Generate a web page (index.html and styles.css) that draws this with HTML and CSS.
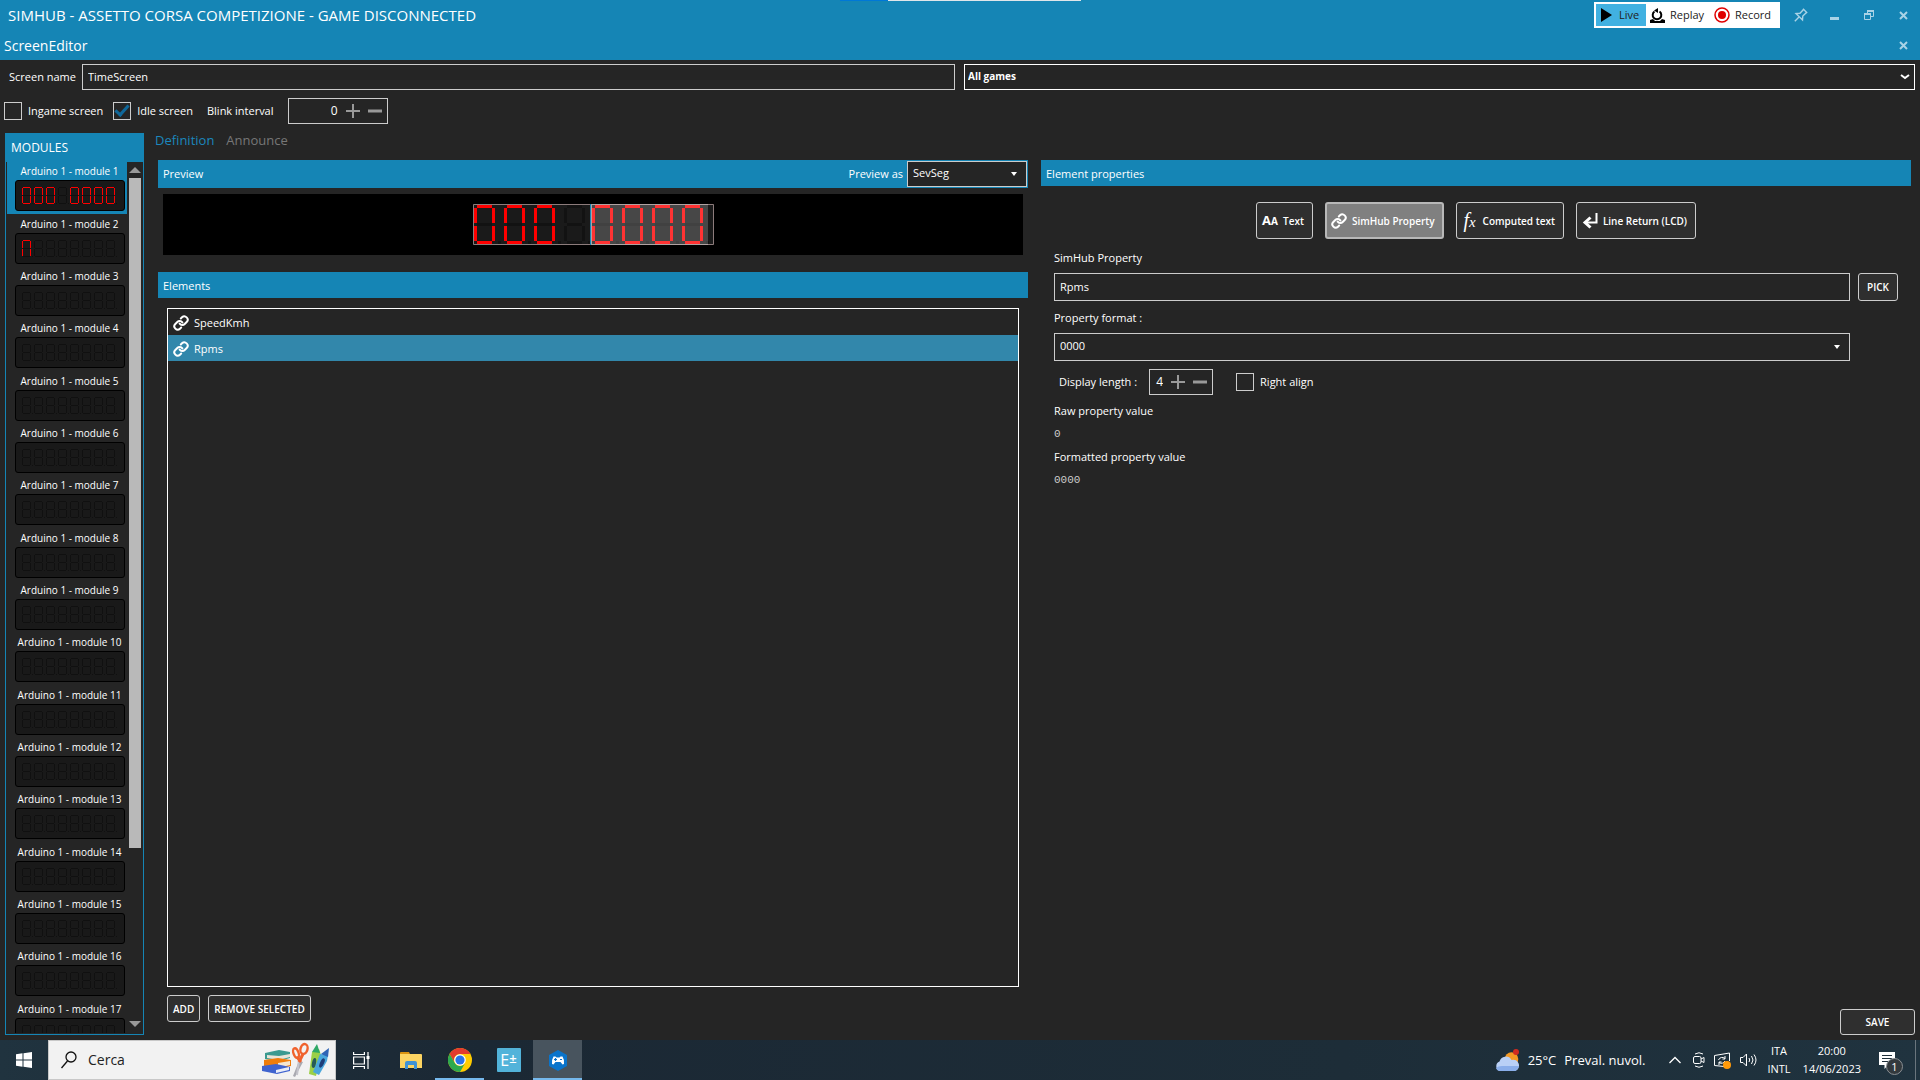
FILE: index.html
```
<!DOCTYPE html>
<html lang="en">
<head>
<meta charset="utf-8">
<title>SimHub - ScreenEditor</title>
<link rel="stylesheet" href="styles.css">
</head>
<body>
<svg class="defs" aria-hidden="true">
  <defs>
    <path id="s-top" d="M1 .5H8"/>
    <path id="s-ul" d="M.5 1V8"/>
    <path id="s-ur" d="M8.500 1V8"/>
    <path id="s-mid" d="M1 8.500H8"/>
    <path id="s-ll" d="M.5 9V16"/>
    <path id="s-lr" d="M8.500 9V16"/>
    <path id="s-bot" d="M1 16.500H8"/>
    <g id="d-zero"><use href="#s-top"/><use href="#s-ul"/><use href="#s-ur"/><use href="#s-ll"/><use href="#s-lr"/><use href="#s-bot"/></g>
    <g id="d-n"><use href="#s-top"/><use href="#s-ul"/><use href="#s-ur"/><use href="#s-ll"/><use href="#s-lr"/></g>
    <g id="d-all"><use href="#d-zero"/><use href="#s-mid"/><path d="M10 16.500h1"/></g>
    <g id="seg-row" stroke="#101010">
      <use href="#d-all" x="6" y="6"/><use href="#d-all" x="18" y="6"/><use href="#d-all" x="30" y="6"/><use href="#d-all" x="42" y="6"/><use href="#d-all" x="54" y="6"/><use href="#d-all" x="66" y="6"/><use href="#d-all" x="78" y="6"/><use href="#d-all" x="90" y="6"/>
    </g>
    <path id="big-zero" d="M3 0h15v3H3zM0 3h3v15H0zM18 3h3v15h-3zM0 21h3v15H0zM18 21h3v15h-3zM3 36h15v3H3z"/>
    <path id="big-mid" d="M3 18h15v3H3zM24 36h3v3h-3z"/>
    <g id="link" fill="none" stroke="currentColor" stroke-width="3" stroke-linecap="round">
      <path d="M10 13a5 5 0 0 0 7.540.540l3-3a5 5 0 0 0-7.070-7.070l-1.720 1.710"/>
      <path d="M14 11a5 5 0 0 0-7.540-.540l-3 3a5 5 0 0 0 7.070 7.070l1.710-1.710"/>
    </g>
    <path id="cross" d="M1 1l7 7M8 1l-7 7" stroke="currentColor" stroke-width="2" fill="none"/>
    <path id="plus" d="M7 0v14M0 7h14" stroke="currentColor" stroke-width="2" fill="none"/>
    <path id="minus" d="M0 7h14" stroke="currentColor" stroke-width="3" fill="none"/>
  </defs>
</svg>

<header class="titles">
  <div class="capture"></div>
  <div class="titlebar">
    <h1 class="app-title">SIMHUB - ASSETTO CORSA COMPETIZIONE - GAME DISCONNECTED</h1>
    <div class="modes">
      <button class="mode mode-live on"><svg width="12" height="14"><path d="M0 0l11 7-11 7z"/></svg>Live</button>
      <button class="mode mode-replay"><svg width="15" height="15" viewBox="0 0 15 15"><path d="M4.500 3.500a4.300 4.300 0 1 0 5 0" fill="none" stroke="#000" stroke-width="2"/><path d="M8 0v5L4 2.500zM0 15v-3l3-1 2 2h5l2-2 3 1v3z"/></svg>Replay</button>
      <button class="mode mode-record"><svg width="16" height="16" viewBox="0 0 16 16"><circle cx="8" cy="8" r="7" fill="none" stroke="#e00000" stroke-width="1.500"/><circle cx="8" cy="8" r="4" fill="#e00000"/></svg>Record</button>
    </div>
    <button class="win" aria-label="Pin"><svg width="14" height="14" viewBox="0 0 14 14" fill="none" stroke="currentColor" stroke-width="1.400"><path d="M9 .8l4.200 4.200M9.500 1.500L6 5.200l-4 .3 6.500 6.500.3-4 3.700-3.500M5 9L.8 13.200"/></svg></button>
    <button class="win" aria-label="Minimize"><svg width="10" height="10"><path d="M0 7h9v3H0z" fill="currentColor"/></svg></button>
    <button class="win" aria-label="Restore"><svg width="10" height="10" fill="none" stroke="currentColor"><path d="M3.500 3V.5h6v6H7M.5 3.500h6v6h-6z"/><path d="M3 1h7M0 4h7" stroke-width="2"/></svg></button>
    <button class="win" aria-label="Close"><svg width="9" height="9"><use href="#cross"/></svg></button>
  </div>
  <div class="titlebar">
    <h2 class="app-title app-sub">ScreenEditor</h2>
    <button class="win" aria-label="Close editor"><svg width="9" height="9"><use href="#cross"/></svg></button>
  </div>
</header>

<main class="editor">
  <div class="name-row">
    <label for="screen-name">Screen name</label>
    <input class="field" id="screen-name" type="text" value="TimeScreen">
    <div class="pick-list strong-list">
      <select class="field" aria-label="Games"><option>All games</option></select>
      <svg class="caret" width="10" height="6"><path d="M1 1l4 3 4-3" fill="none" stroke="#fff" stroke-width="2"/></svg>
    </div>
  </div>

  <div class="options">
    <label class="check"><input type="checkbox">Ingame screen</label>
    <label class="check"><input type="checkbox" checked>Idle screen</label>
    <label class="blink-label" for="blink">Blink interval</label>
    <div class="stepper stepper-wide">
      <input id="blink" type="text" value="0">
      <button aria-label="Increase blink interval"><svg width="14" height="14"><use href="#plus"/></svg></button>
      <button aria-label="Decrease blink interval"><svg width="14" height="14"><use href="#minus"/></svg></button>
    </div>
  </div>

  <div class="workspace">
    <aside class="modules">
      <h3 class="modules-head">MODULES</h3>
      <div class="modules-body">
        <ul class="module-list">
          <li class="module selected">Arduino 1 - module 1<svg class="display"><use href="#seg-row"/><g stroke="#f00"><use href="#d-zero" x="6" y="6"/><use href="#d-zero" x="18" y="6"/><use href="#d-zero" x="30" y="6"/><use href="#d-zero" x="54" y="6"/><use href="#d-zero" x="66" y="6"/><use href="#d-zero" x="78" y="6"/><use href="#d-zero" x="90" y="6"/></g></svg></li>
          <li class="module">Arduino 1 - module 2<svg class="display"><use href="#seg-row"/><g stroke="#f00"><use href="#d-n" x="6" y="6"/></g></svg></li>
          <li class="module">Arduino 1 - module 3<svg class="display"><use href="#seg-row"/></svg></li>
          <li class="module">Arduino 1 - module 4<svg class="display"><use href="#seg-row"/></svg></li>
          <li class="module">Arduino 1 - module 5<svg class="display"><use href="#seg-row"/></svg></li>
          <li class="module">Arduino 1 - module 6<svg class="display"><use href="#seg-row"/></svg></li>
          <li class="module">Arduino 1 - module 7<svg class="display"><use href="#seg-row"/></svg></li>
          <li class="module">Arduino 1 - module 8<svg class="display"><use href="#seg-row"/></svg></li>
          <li class="module">Arduino 1 - module 9<svg class="display"><use href="#seg-row"/></svg></li>
          <li class="module">Arduino 1 - module 10<svg class="display"><use href="#seg-row"/></svg></li>
          <li class="module">Arduino 1 - module 11<svg class="display"><use href="#seg-row"/></svg></li>
          <li class="module">Arduino 1 - module 12<svg class="display"><use href="#seg-row"/></svg></li>
          <li class="module">Arduino 1 - module 13<svg class="display"><use href="#seg-row"/></svg></li>
          <li class="module">Arduino 1 - module 14<svg class="display"><use href="#seg-row"/></svg></li>
          <li class="module">Arduino 1 - module 15<svg class="display"><use href="#seg-row"/></svg></li>
          <li class="module">Arduino 1 - module 16<svg class="display"><use href="#seg-row"/></svg></li>
          <li class="module">Arduino 1 - module 17<svg class="display"><use href="#seg-row"/></svg></li>
        </ul>
        <div class="scrollbar">
          <svg width="12" height="6"><path d="M0 6l6-6 6 6z" fill="#999"/></svg>
          <div class="track"><div class="thumb"></div></div>
          <svg width="12" height="6"><path d="M0 0l6 6 6-6z" fill="#999"/></svg>
        </div>
      </div>
    </aside>

    <div class="content">
      <nav class="tabs">
        <a class="tab current" href="#definition">Definition</a>
        <a class="tab" href="#announce">Announce</a>
      </nav>
      <div class="columns">
        <section class="column">
          <div class="bar preview-bar">
            <h3>Preview</h3>
            <label for="preview-as">Preview as</label>
            <div class="pick-list preview-pick">
              <select class="field" id="preview-as"><option>SevSeg</option></select>
              <svg class="caret" width="6" height="4"><path d="M0 0h6L3 4z" fill="#fff"/></svg>
            </div>
          </div>
          <div class="preview">
            <svg width="241" height="41" viewBox="-1 -1 241 41">
              <path d="M-1-1h241v41H-1z" fill="#1a1a1a"/>
              <g fill="#121212">
                <use href="#big-mid"/><use href="#big-mid" x="30"/><use href="#big-mid" x="60"/><use href="#big-mid" x="90"/><use href="#big-zero" x="90"/>
                <use href="#big-mid" x="118"/><use href="#big-mid" x="148"/><use href="#big-mid" x="178"/><use href="#big-mid" x="208"/>
              </g>
              <g fill="#f00">
                <use href="#big-zero"/><use href="#big-zero" x="30"/><use href="#big-zero" x="60"/>
                <use href="#big-zero" x="118"/><use href="#big-zero" x="148"/><use href="#big-zero" x="178"/><use href="#big-zero" x="208"/>
              </g>
              <path d="M117 0h117v39H117z" fill="#fff" fill-opacity=".2"/>
              <path d="M-.5-.5h240v40H-.5z" fill="none" stroke="#8c7b7b"/>
              <path d="M117.500 0v39M117-.5h117M117 39.500h117" stroke="#b0a2a2"/>
              <path d="M116.500-1v41" stroke="#1585b5"/>
            </svg>
          </div>
          <div class="bar"><h3>Elements</h3></div>
          <ul class="elements">
            <li class="element"><svg width="16" height="16" viewBox="0 0 24 24"><use href="#link"/></svg>SpeedKmh</li>
            <li class="element selected"><svg width="16" height="16" viewBox="0 0 24 24"><use href="#link"/></svg>Rpms</li>
          </ul>
          <div class="list-actions">
            <button class="btn">ADD</button>
            <button class="btn">REMOVE SELECTED</button>
          </div>
        </section>

        <section class="column">
          <div class="bar"><h3>Element properties</h3></div>
          <div class="kinds">
            <button class="btn kind"><span class="glyph letters">A<small>A</small></span>Text</button>
            <button class="btn kind pressed"><svg width="16" height="16" viewBox="0 0 24 24"><use href="#link"/></svg>SimHub Property</button>
            <button class="btn kind"><span class="glyph function">f<small>x</small></span>Computed text</button>
            <button class="btn kind"><svg width="16" height="16" viewBox="0 0 16 16" fill="none" stroke="#fff" stroke-width="2"><path d="M14.500 0v9.500H4"/><path d="M8.500 4.500L3 9.500l5.500 5" stroke-width="3"/></svg>Line Return (LCD)</button>
          </div>
          <form class="props">
            <label for="prop">SimHub Property</label>
            <input class="field tall" id="prop" type="text" value="Rpms">
            <button class="btn pick" type="button">PICK</button>
            <label for="format">Property format :</label>
            <div class="pick-list">
              <select class="field tall" id="format"><option>0000</option></select>
              <svg class="caret" width="6" height="4"><path d="M0 0h6L3 4z" fill="#fff"/></svg>
            </div>
            <div class="length-row">
              <label for="length">Display length :</label>
              <div class="stepper">
                <input id="length" type="text" value="4">
                <button type="button" aria-label="Increase length"><svg width="14" height="14"><use href="#plus"/></svg></button>
                <button type="button" aria-label="Decrease length"><svg width="14" height="14"><use href="#minus"/></svg></button>
              </div>
              <label class="check"><input type="checkbox">Right align</label>
            </div>
            <dl class="values">
              <dt>Raw property value</dt><dd>0</dd>
              <dt>Formatted property value</dt><dd>0000</dd>
            </dl>
          </form>
          <button class="btn save">SAVE</button>
        </section>
      </div>
    </div>
  </div>
</main>

<footer class="taskbar">
  <button class="task start" aria-label="Start"><svg width="16" height="16" fill="#fff"><path d="M0 2.200l6.500-.9v6.200H0zM7.500 1.200L16 0v7.500H7.500zM0 8.500h6.500v6.200L0 13.800zM7.500 8.500H16V16l-8.500-1.200z"/></svg></button>
  <div class="search">
    <svg width="16" height="18" viewBox="0 0 16 18" fill="none" stroke="#111" stroke-width="1.300"><circle cx="10" cy="6" r="5"/><path d="M6.500 10L.5 17"/></svg>
    <input type="text" value="Cerca" aria-label="Cerca">
    <svg width="68" height="36" viewBox="0 0 68 36">
      <path d="M3 11l14-3 11 2v6l-11 3-14-2z" fill="#3b9a90"/><path d="M5 13l12 1 11-2v3l-11 3-12-2z" fill="#e9e4d8"/>
      <path d="M2 18l14-2 13 2v6l-13 3-14-3z" fill="#ef7d0c"/><path d="M16 21l12-2v4l-12 3z" fill="#f4e6d0"/>
      <path d="M0 24l14-2 14 3v4l-13 3-15-3z" fill="#3f63cf"/><path d="M14 28l13-3v3l-13 3z" fill="#e8ecf8"/>
      <path d="M37 19l4 1-8 15-2-1z" fill="#a9a9b0"/><path d="M37 18l-2 15" stroke="#c4c4cb" stroke-width="2"/>
      <ellipse cx="34" cy="11" rx="2.500" ry="5" transform="rotate(-20 34 11)" fill="none" stroke="#f0622d" stroke-width="2.400"/><ellipse cx="42" cy="7" rx="3.500" ry="5" transform="rotate(15 42 7)" fill="none" stroke="#f0622d" stroke-width="2.400"/><path d="M35 15l4 5M41 12l-4 8" stroke="#f0622d" stroke-width="3"/>
      <path d="M50 10l7-3 2 6-5 21-7-2z" fill="#9bd047"/><path d="M50 10l5-8 3 9z" fill="#2fa866"/><path d="M58 12l8 1-1 6-8 14-6-3z" fill="#4aa7dc"/><path d="M59 12l8-6-1 9z" fill="#2f64b5"/>
      <ellipse cx="52" cy="21" rx="2" ry="5" transform="rotate(12 52 21)" fill="#245a59"/><ellipse cx="60" cy="21" rx="2" ry="5" transform="rotate(25 60 21)" fill="#1d3d78"/>
    </svg>
  </div>
  <button class="task" aria-label="Task view"><svg width="17" height="17" viewBox="0 0 17 17" fill="none" stroke="#fff" stroke-width="1.200"><path d="M.6 0v2.500h10.800V0M.6 17v-2.500h10.800V17M.6 5h10.800v7H.6zM15 0v17"/><path d="M13.500 4h3v3h-3z" fill="#fff" stroke="none"/></svg></button>
  <button class="task" aria-label="File Explorer"><svg width="22" height="19" viewBox="0 0 22 19"><path d="M0 2q0-1 1-1h8l1 2h-10z" fill="#d99310"/><path d="M0 3h21q1 0 1 1v13H0z" fill="#fcd462"/><path d="M5 18v-6q0-2 2-2h8q2 0 2 2v6h-3v-4H8v4z" fill="#3f93d6"/></svg></button>
  <button class="task open" aria-label="Chrome"><svg width="24" height="24" viewBox="0 0 24 24"><circle cx="12" cy="12" r="12" fill="#fc0"/><path d="M1.600 6A12 12 0 0 1 22.400 6H12a6 6 0 0 0-5.200 9z" fill="#e33b2e"/><path d="M1.600 6A12 12 0 0 0 12 24l5.200-9a6 6 0 0 1-10.400 0z" fill="#2da94f"/><circle cx="12" cy="12" r="5.800" fill="#fff"/><circle cx="12" cy="12" r="4.600" fill="#2a73e8"/></svg></button>
  <button class="task" aria-label="E±"><span class="e-tile">E<small>±</small></span></button>
  <button class="task active" aria-label="SimHub"><svg width="18" height="21" viewBox="0 0 18 21"><path d="M9 0l9 5v11l-9 5-9-5V5z" fill="#0a74cb"/><path d="M4.500 6.500h2l1 1h3l1-1h2q2 3 1.500 7.500l-1.500.5-2-2.500h-5l-2 2.500L3 14q-.5-4.500 1.500-7.500z" fill="#fff"/><path d="M5 9.500h3M6.500 8v3M11 9.500h2" stroke="#0a74cb" stroke-width="1.200"/></svg></button>

  <div class="tray">
    <a class="weather" href="#weather"><svg width="25" height="23" viewBox="0 0 25 23"><circle cx="16.500" cy="10" r="6.800" fill="#f59a23"/><circle cx="21" cy="3" r="3" fill="#d02b20"/><path d="M5 22a5 5 0 0 1-.5-9.500 6.500 6.500 0 0 1 12-1.500 5.600 5.600 0 0 1 3.500 11z" fill="#b9d0f6"/><path d="M1 19q2-2 6-2h17q-1 4-4 5H5q-3 0-4-3z" fill="#8aaeea"/></svg><span>25°C</span><span>Preval. nuvol.</span></a>
    <svg class="chevron" width="12" height="8" fill="none" stroke="#fff" stroke-width="1.300"><path d="M.5 7L6 1.500 11.500 7"/></svg>
    <svg width="12" height="16" viewBox="0 0 12 16" fill="none" stroke="#fff"><rect x=".5" y="4.500" width="7.500" height="7" rx="1.500"/><path d="M8 7l3-1.500v5L8 9M2 2q4-2.500 8 0M2 14q4 2.500 8 0"/></svg>
    <svg width="17" height="17" viewBox="0 0 17 17" fill="none" stroke="#fff"><path d="M10 14.500l-9.500-1V3.500L15.500 1v8"/><path d="M4.500 8A4 4 0 0 1 11 6.500M11 4v3H8.500M11 9a4 4 0 0 1-6 1.500M5 13v-3h2.500"/><circle cx="13" cy="13" r="4" fill="#ff9a0a" stroke="none"/></svg>
    <svg width="17" height="14" viewBox="0 0 17 14" fill="none" stroke="#fff"><path d="M.5 4.500h2.500L6.500 1v12L3 9.500H.5zM9 5q1.500 2 0 4M11.500 3q3 4 0 8M14 1.500q4 5.500 0 11"/></svg>
    <div class="stack lang"><span>ITA</span><span>INTL</span></div>
    <div class="stack clock"><span>20:00</span><span>14/06/2023</span></div>
    <div class="notices"><svg width="16" height="17" viewBox="0 0 16 17"><path d="M0 0h16v13H9l-3.500 4v-4H0z" fill="#fff"/><path d="M3 3.500h10M3 6.500h10M3 9.500h6" stroke="#1f2f3a" stroke-width="1.200"/></svg><span class="badge">1</span></div>
    <div class="desktop-edge"></div>
  </div>
</footer>
</body>
</html>
```
FILE: styles.css
```
* { box-sizing: border-box; }

:root {
  --blue: #1585b5;
  --dark: #252525;
  --line: #ccc;
}

body {
  margin: 0;
  height: 100vh;
  display: flex;
  flex-direction: column;
  background: var(--dark);
  color: #fff;
  font: 11px/16px "Open Sans", sans-serif;
}

h1, h2, h3, ul, dl, dd { margin: 0; padding: 0; font-weight: 400; font-size: inherit; }
ul { list-style: none; }
button, input, select { font: inherit; color: inherit; margin: 0; }
button { background: none; border: 0; padding: 0; }
svg { display: block; flex: none; }
.defs { position: absolute; width: 0; height: 0; }

/* Title bars */
.titles { position: relative; background: var(--blue); }
.capture {
  position: absolute;
  top: 0;
  left: 840px;
  width: 241px;
  height: 1px;
  background: linear-gradient(90deg, #0078d7 48px, #e0e6ea 48px);
}
.titlebar { display: flex; align-items: center; height: 30px; padding-left: 8px; }
.titlebar + .titlebar { padding-left: 4px; }
.app-title { flex: 1; font-size: 15px; line-height: 30px; }
.app-sub { font-size: 14px; padding-top: 2px; }
.win { width: 34px; height: 30px; display: grid; place-items: center; color: #a9d3e6; }
.modes { display: flex; height: 26px; padding: 2px; background: #fff; color: #222; margin-right: 4px; }
.mode { display: flex; align-items: center; gap: 5px; }
.mode-live { width: 50px; padding-left: 5px; gap: 6px; }
.mode-replay { width: 64px; padding-left: 4px; }
.mode-record { width: 68px; padding-left: 4px; }
.mode.on { background: #41b1e1; }

/* Form controls */
.field {
  width: 100%;
  height: 26px;
  padding: 0 5px 2px;
  background: var(--dark);
  border: 1px solid var(--line);
  border-radius: 0;
  outline: 0;
  appearance: none;
}
.field.tall { height: 28px; }
.pick-list { display: grid; align-items: center; }
.pick-list > * { grid-area: 1 / 1; }
.caret { justify-self: end; margin-right: 10px; pointer-events: none; }
.check { display: flex; align-items: center; gap: 6px; }
.check input {
  appearance: none;
  width: 18px;
  height: 18px;
  border: 1px solid var(--line);
  display: grid;
  place-items: center;
}
.check input:checked::after {
  content: "";
  width: 11px;
  height: 5px;
  margin-bottom: 4px;
  border: solid #10689a;
  border-width: 0 0 3px 3px;
  transform: rotate(-48deg);
}
.stepper {
  display: flex;
  align-items: center;
  gap: 8px;
  width: 64px;
  height: 26px;
  padding: 0 5px;
  border: 1px solid var(--line);
  color: #999;
}
.stepper-wide { width: 100px; }
.stepper input {
  flex: 1;
  min-width: 0;
  width: 0;
  padding: 0;
  border: 0;
  outline: 0;
  background: none;
  color: #fff;
  text-align: right;
  font-size: 12px;
}
.btn {
  height: 27px;
  padding: 0 5px;
  border: 1px solid var(--line);
  border-radius: 3px;
  background: #2f2f2f;
  font-size: 10px;
  font-weight: 600;
}

/* Screen settings */
.editor { flex: 1; min-height: 0; display: flex; flex-direction: column; padding: 4px 5px 5px; }
.name-row { display: grid; grid-template-columns: 68px 869fr 951fr; align-items: center; padding-left: 4px; column-gap: 9px; }
.name-row > input { margin-left: -4px; width: calc(100% + 4px); }
.strong-list .field { border-color: #fff; font-size: 10px; font-weight: 700; padding-left: 3px; }
.strong-list .caret { margin-right: 5px; }
.options { display: flex; align-items: center; height: 26px; margin: 8px 0 9px -1px; }
.options .check + .check { margin-left: 10px; }
.blink-label { margin: 0 14px; }

.workspace { flex: 1; min-height: 0; display: flex; gap: 11px; }

/* Module list */
.modules { width: 139px; display: flex; flex-direction: column; }
.modules-head { height: 28px; padding: 0 6px; line-height: 30px; background: var(--blue); font-size: 12px; }
.modules-body { flex: 1; min-height: 0; display: flex; border: 1px solid var(--blue); padding: 0 1px 1px; }
.module-list { width: 121px; overflow: hidden; }
.module { height: 52px; font-size: 10px; line-height: 18px; text-align: center; padding: 0 3px 0 8px; white-space: nowrap; }
.module:nth-child(3n + 1) { margin-bottom: 1px; }
.module.selected { background: var(--blue); }
.display { width: 110px; height: 31px; background: #191919; border: 1px solid #000; border-radius: 3px; fill: none; }
.scrollbar { flex: 1; display: flex; flex-direction: column; align-items: center; padding: 5px 0 6px 1px; }
.track { flex: 1; align-self: stretch; padding: 5px 1px; }
.thumb { width: 12px; height: 80%; background: #b9b9b9; }

/* Workspace */
.content { flex: 1; min-width: 0; display: flex; flex-direction: column; }
.tabs { display: flex; gap: 12px; height: 27px; font-size: 13px; line-height: 15px; }
.tab { color: #777; text-decoration: none; }
.tab.current { color: #1b87bd; }
.columns { flex: 1; min-height: 0; display: grid; grid-template-columns: 1fr 1fr; gap: 13px; padding: 0 4px 0 3px; }
.column { min-width: 0; display: flex; flex-direction: column; }
.bar { display: flex; align-items: center; height: 26px; padding: 2px 5px 0; background: var(--blue); }
.bar h3 { flex: 1; }
.preview-bar { height: 28px; padding: 0 1px 0 5px; }
.preview-pick { width: 120px; margin-left: 4px; }
.preview { display: grid; place-items: center; height: 61px; margin: 6px 5px 17px; background: #000; }
.elements { flex: 1; margin: 10px 9px 0; border: 1px solid #fff; }
.element { display: flex; align-items: center; gap: 5px; height: 26px; padding: 1px 5px 0; }
.element.selected { background: #3287ab; }
.list-actions { display: flex; gap: 8px; padding: 8px 9px 13px; }

/* Element properties */
.kinds { display: flex; justify-content: center; gap: 12px; padding-top: 16px; }
.kind { display: flex; align-items: center; gap: 5px; height: 37px; padding: 0 8px 0 5px; }
.kind.pressed { background: #808080; border: 2px solid #b8b8b8; padding: 0 7px 0 4px; }
.glyph { width: 16px; display: flex; align-items: baseline; justify-content: center; line-height: 24px; }
.letters { font-size: 13px; font-weight: 700; }
.letters small { font-size: 10px; }
.function { font: italic 20px/24px "Liberation Serif", serif; }
.function small { font-size: 15px; }
.props { display: grid; grid-template-columns: 1fr 40px; column-gap: 8px; padding: 10px 13px 0; }
.props > label { grid-column: 1 / 3; padding: 1px 0 7px; }
.props > label + .pick-list { grid-column: 1; }
.props > .pick + label { padding-top: 9px; }
.pick { height: 28px; }
.length-row { grid-column: 1 / 3; display: flex; align-items: center; padding: 8px 0 0 5px; }
.length-row .stepper { margin: 0 23px 0 12px; }
.values { grid-column: 1 / 3; padding-top: 8px; }
.values dd { padding: 7px 0; font-family: "Liberation Mono", monospace; color: #ccc; }
.save { width: 75px; height: 26px; margin: auto -4px 0 auto; }

/* Taskbar */
.taskbar { display: flex; height: 40px; background: linear-gradient(90deg, #20333f, #1b2834 25%, #1d2d38 70%, #20333f); }
.task { width: 49px; display: grid; place-items: center; }
.task.start { width: 48px; }
.task.open { box-shadow: inset 0 -2px #76b9ed; }
.task.active { background: #48545e; box-shadow: inset 0 -2px #76b9ed; }
.e-tile { width: 24px; height: 24px; display: flex; justify-content: center; background: #52b3da; border-radius: 1px; font-size: 16px; line-height: 24px; }
.e-tile small { font-size: 13px; line-height: 21px; font-weight: 600; }
.search { display: flex; align-items: center; width: 288px; margin-right: 1px; padding: 0 5px 0 12px; background: #f2f2f2; border: 1px solid #c8c8c8; color: #222; font-size: 14px; }
.search input { flex: 1; min-width: 0; border: 0; padding: 0 0 0 11px; background: none; outline: 0; }
.tray { display: flex; align-items: center; gap: 9px; margin-left: auto; }
.weather { display: flex; align-items: center; gap: 8px; margin-right: 15px; color: #fff; text-decoration: none; font-size: 13px; }
.chevron { margin-right: 3px; }
.stack { display: flex; flex-direction: column; align-items: center; line-height: 18px; }
.lang { margin-left: 1px; }
.clock { margin-left: 3px; }
.notices { position: relative; margin: 0 24px 0 9px; }
.badge {
  position: absolute;
  left: 7px;
  top: 6px;
  width: 17px;
  height: 17px;
  border: 1px solid #8a8f93;
  border-radius: 50%;
  background: #33393d;
  text-align: center;
  line-height: 15px;
}
.desktop-edge { align-self: stretch; width: 5px; border-left: 1px solid #6a757d; margin-left: -13px; }
```
